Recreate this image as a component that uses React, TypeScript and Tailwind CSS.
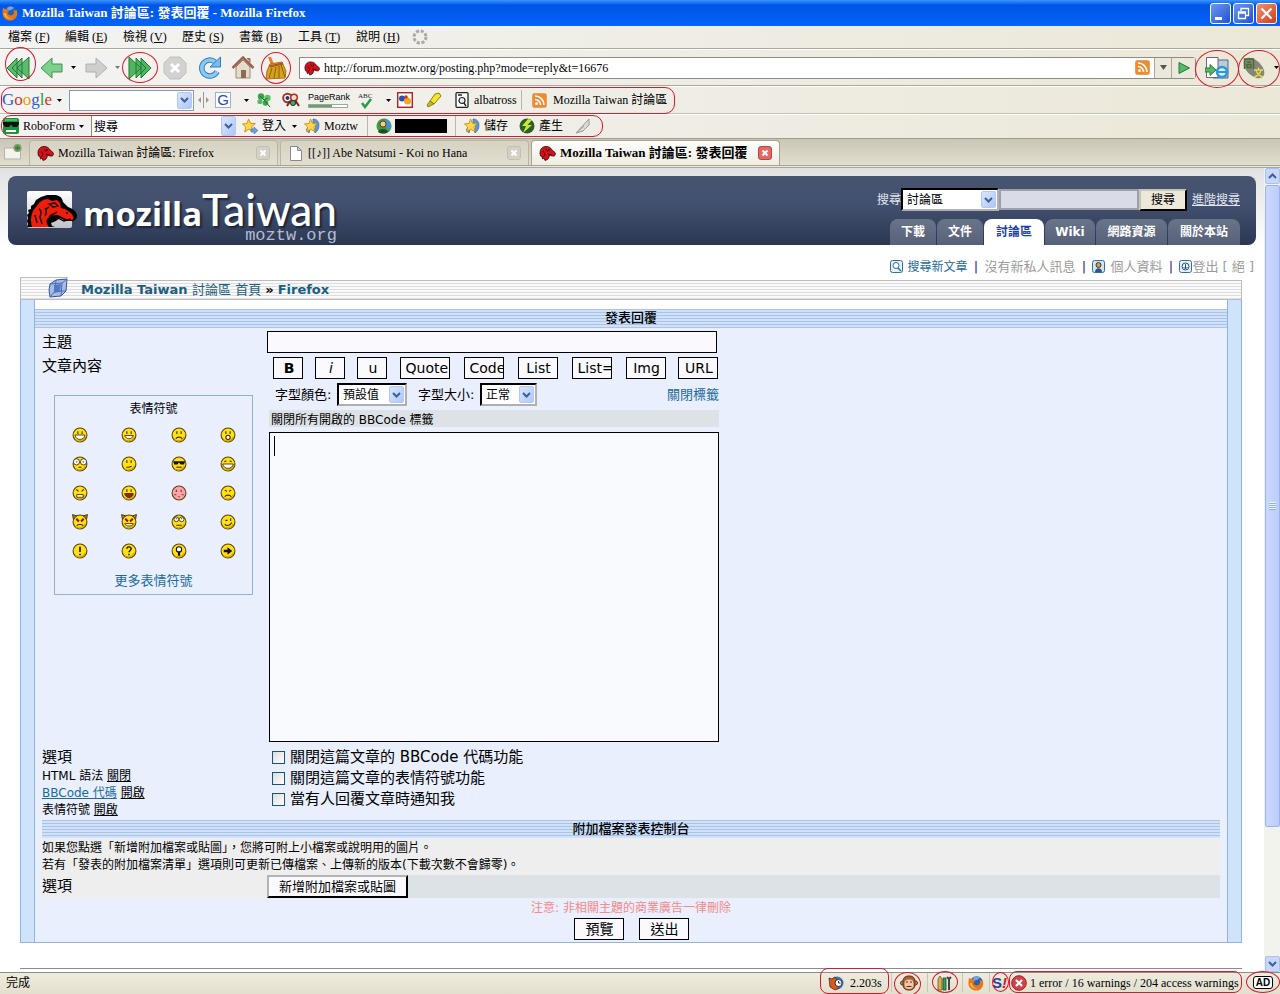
import React from "react";

const serif = "font-['Liberation_Serif','Noto_Sans_CJK_TC',serif]";
const sans = "font-['DejaVu_Sans','Noto_Sans_CJK_TC',sans-serif]";

const menus = [
  ["檔案", "F", "w-[57px]"],
  ["編輯", "E", "w-[58px]"],
  ["檢視", "V", "w-[59px]"],
  ["歷史", "S", "w-[57px]"],
  ["書籤", "B", "w-[59px]"],
  ["工具", "T", "w-[58px]"],
  ["說明", "H", "w-[56px]"],
];

const siteTabs = [
  ["下載", "w-[46px]"],
  ["文件", "w-[46px]"],
  ["討論區", "w-[60px]"],
  ["Wiki", "w-[50px]"],
  ["網路資源", "w-[71px]"],
  ["關於本站", "w-[72px]"],
];

const faces = [
  "grin", "smile", "sad", "shock",
  "eek", "confused", "cool", "lol",
  "mad", "razz", "blush", "cry",
  "evil", "twisted", "roll", "wink",
  "!", "?", "idea", "arrow",
];

/* Red pen marks drawn around the add-ons */
function Ring({ className }: { className: string }) {
  return <span className={`pointer-events-none absolute z-10 border border-[#d8182c] ${className}`} />;
}

function Caret() {
  return (
    <svg className="h-[3px] w-[5px] shrink-0" viewBox="0 0 5 3">
      <path d="M0 0h5L2.5 3z" fill="#000" />
    </svg>
  );
}

function Sep() {
  return <span className="h-5 w-px shrink-0 bg-[#b9b7a8]" />;
}

function DropArrow({ className }: { className: string }) {
  return (
    <span
      className={`pointer-events-none absolute flex w-[15px] items-center justify-center rounded-[2px] border border-[#b4c8f5] bg-linear-to-br from-[#dbe6fd] to-[#aec6f8] ${className}`}
    >
      <svg className="h-[6px] w-[9px]" viewBox="0 0 9 6">
        <path d="M1 1l3.500 3.500L8 1" fill="none" stroke="#3f5f94" strokeWidth="2" />
      </svg>
    </span>
  );
}

function XpSelect({ label, value, className }: { label: string; value: string; className: string }) {
  return (
    <span className={`relative flex h-[23px] shrink-0 ${className}`}>
      <select
        aria-label={label}
        className="h-full w-full appearance-none border-2 border-t-black border-l-black border-r-[#b0b0b0] border-b-[#b0b0b0] bg-white pl-1 text-[12px] leading-4 text-black"
      >
        <option>{value}</option>
      </select>
      <DropArrow className="top-[3px] right-[3px] bottom-[3px]" />
    </span>
  );
}

function Firefox() {
  return (
    <svg className="h-4 w-4 shrink-0" viewBox="0 0 16 16">
      <circle cx="8.500" cy="7.500" r="6.300" fill="#2b5fb3" />
      <path d="M5 3c2-2 5-2 7 0l-3 2-3 .5z" fill="#6fa8e8" />
      <path d="M1 3c1 .3 1.800 1 2.500 1C5 4 6 4.500 7 6L5.500 7.500c0 2.500 3 3.500 5 2.500 1.500-.8 2-3 1-5.500 2 1.200 2.700 2 2.800 0C17 9 14 15.500 8.500 15.500 3 15.500 0 11.500.5 7 .5 5.500.8 4.200 1 3z" fill="#e9761b" />
      <path d="M2 8c0 4 4 6.500 8 5.500-3 0-6-1.500-6-5z" fill="#fcc43c" />
    </svg>
  );
}

function Dino({ className }: { className: string }) {
  return (
    <svg className={`shrink-0 ${className}`} viewBox="0 0 17 16">
      <path d="M1 8C1 4 3.500 1.500 7 1.500c3 0 5 1.500 6 3.500l3 2.500c.8 1 .5 3-.8 3.500-2.200.5-3.700-.8-5.200-1 .5 1.500 0 3-1.500 4.500L6 15.500 5 13l-1.500 1L3 11.500 1.500 11z" fill="#d3121c" stroke="#300" strokeWidth=".8" />
      <path d="M4 6l2 3-1.500 3M7 4l2 3M9 9l4 1" stroke="#400" fill="none" strokeWidth=".8" />
      <circle cx="10" cy="5" r=".8" fill="#000" />
    </svg>
  );
}

function DinoLogo() {
  return (
    <svg className="h-[38px] w-[50px] shrink-0" viewBox="0 0 50 38">
      <defs>
        <linearGradient id="logo" x1="0" y1="0" x2="0" y2="1">
          <stop offset="0" stopColor="#fff" />
          <stop offset="1" stopColor="#bfc3ca" />
        </linearGradient>
      </defs>
      <rect x="0" y="0" width="45" height="37" rx="2" fill="url(#logo)" />
      <path d="M0 36l1-3-1-3 1-3-1-3 2-2-1-3 3-1v-3l3-2 2-4 5-3 6-2h7c5 0 8 2 9 7l5 5c5 2 8 4 9 8 0 4-2 6-6 6-5 0-8-1-11-3l-4 3-5 2 1 3 3 1H0z" fill="#000" />
      <path d="M5 36c-2-8-1-15 4-20 3-5 7-8 12-8l4 2 5-1 3 3 1 5c5 1 10 4 12 8 1 2 1 4-2 4-6 0-9-4-14-5-4 0-6 1-9 3-3 3-1 6 1 9z" fill="#f01c0c" />
      <path d="M30 21c-2 2-5 2-7 4 6 0 9 3 14 5l7-2M12 18c3 1 2 5 1 8l2 7M18 17c2 3 2 5 0 8M22 13l6-1 3 3-5 1zM8 24l2 8M22 16l-3 2" stroke="#1a0000" strokeWidth="1.400" fill="none" />
      <circle cx="40" cy="22" r="1" fill="#000" />
    </svg>
  );
}

function Star({ blue }: { blue?: boolean }) {
  return (
    <svg className="h-4 w-4 shrink-0" viewBox="0 0 16 16">
      {blue && <path d="M9 1c4 0 6 3 6 6s-1 6-4 8l-1-3 2-3-3-4zM2 11l4 1-1 3z" fill="#5b97d8" stroke="#2b5fa0" strokeWidth=".6" />}
      <path d="M6.500 1l2 4.300 4.800.3-3.600 3.200 1.400 4.800-4.400-2.400-4 2.800 1-4.900L.5 6l4.500-.6z" fill="#ffd64a" stroke="#c98b12" strokeWidth=".9" />
      {!blue && <path d="M9 11h3V9l4 3.500-4 3.500v-2H9z" fill="#6aa0e0" stroke="#2f62a8" strokeWidth=".5" />}
    </svg>
  );
}

function Rss() {
  return (
    <svg className="h-[15px] w-[15px] shrink-0" viewBox="0 0 15 15">
      <rect x=".5" y=".5" width="14" height="14" rx="2" fill="#f08a30" stroke="#e0a060" />
      <circle cx="4.500" cy="10.700" r="1.400" fill="#fff" />
      <path d="M3 6.500a5.500 5.500 0 015.500 5.500M3 3a9 9 0 019 9" stroke="#fff" strokeWidth="1.600" fill="none" />
    </svg>
  );
}

function Smiley({ kind }: { kind: string }) {
  const ink = "#3a2a00";
  const eyes = <path d="M5.500 4v2.500M9.500 4v2.500" stroke={ink} strokeWidth="1" />;
  return (
    <svg className="h-4 w-4" viewBox="0 0 15 15">
      {(kind === "evil" || kind === "twisted") && <path d="M.5.500L5 2 1.500 6zM14.500.5L10 2l3.500 4z" fill="#c87f10" stroke={ink} strokeWidth=".8" />}
      <circle cx="7.500" cy="7.500" r="6.500" fill={kind === "blush" ? "#f9a3ab" : "#ffe016"} stroke="#5a4300" />
      {kind !== "blush" && <path d="M3.500 12c3 2 7.500 1 9-3" stroke="#d9a400" fill="none" />}
      {kind === "grin" && <>{eyes}<path d="M3 7.500h9c0 5.500-9 5.500-9 0z" fill="#fff" stroke={ink} strokeWidth=".8" /></>}
      {kind === "smile" && <>{eyes}<path d="M3.500 8h8c-1 4-7 4-8 0z" fill="#fff" stroke={ink} strokeWidth=".8" /></>}
      {kind === "sad" && <>{eyes}<path d="M4.500 11c1-2 5-2 6 0" stroke={ink} fill="none" /></>}
      {kind === "shock" && <>{eyes}<circle cx="7.500" cy="9.700" r="2" fill="#fff" stroke={ink} /></>}
      {kind === "eek" && <><circle cx="4.200" cy="5.500" r="2.900" fill="#fff" stroke={ink} strokeWidth=".8" /><circle cx="10.800" cy="5.500" r="2.900" fill="#fff" stroke={ink} strokeWidth=".8" /><path d="M4 5.500h1M10 5.500h1M6 10.500h3" stroke={ink} /></>}
      {kind === "confused" && <>{eyes}<path d="M5 10.500h2.500l2.500-1" stroke={ink} fill="none" /></>}
      {kind === "cool" && <><path d="M2 5h11v1l-1 2H9L7.500 6 6 8H3z" fill="#111" /><path d="M5 10.500h5" stroke={ink} /></>}
      {kind === "lol" && <><path d="M4 5.500l2-1M11 5.500l-2-1" stroke={ink} /><path d="M2.500 7.500h10c-1 5.500-9 5.500-10 0z" fill="#fff" stroke={ink} strokeWidth=".8" /></>}
      {kind === "mad" && <><path d="M4 4l2 2M11 4L9 6" stroke={ink} /><path d="M4.500 9h6v2.500h-6z" fill="#fff" stroke={ink} strokeWidth=".8" /></>}
      {kind === "razz" && <>{eyes}<path d="M3.500 8h8c-.5 5-7.500 5-8 0z" fill="#a02010" stroke={ink} strokeWidth=".8" /></>}
      {kind === "blush" && <><path d="M5 4.500v2M9.500 4.500v2" stroke="#7a2028" /><path d="M3 9h2M10 9h2M6.500 11h2" stroke="#c93845" /></>}
      {kind === "cry" && <><path d="M4.500 5l2 .8M10.500 5l-2 .8" stroke={ink} /><path d="M4.500 11c1-2 5-2 6 0" stroke={ink} fill="none" /></>}
      {kind === "evil" && <><path d="M4 4.500l2.500 2.500M11 4.500L8.500 7" stroke="#8a1000" strokeWidth="1.800" /><path d="M4.500 11c1-1.500 5-1.500 6 0" stroke={ink} fill="none" /></>}
      {kind === "twisted" && <><path d="M4 4.500l2.500 2.500M11 4.500L8.500 7" stroke="#8a1000" strokeWidth="1.800" /><path d="M3.500 9h8c-1 3-7 3-8 0z" fill="#fff" stroke={ink} strokeWidth=".8" /></>}
      {kind === "roll" && <><circle cx="5" cy="5" r="2.200" fill="#fff" stroke={ink} strokeWidth=".8" /><circle cx="10" cy="5" r="2.200" fill="#fff" stroke={ink} strokeWidth=".8" /><path d="M5 4v1M10 4v1M5 10.500h5" stroke={ink} /></>}
      {kind === "wink" && <><path d="M5 6h2M10 4v2.500" stroke={ink} /><path d="M4.500 9.500c1.500 2 5 2 6.500-1.500" stroke={ink} fill="none" /></>}
      {kind === "!" && <path d="M7.500 3.500v5M7.500 10v1.500" stroke="#111" strokeWidth="1.500" />}
      {kind === "?" && <path d="M5.500 5.500c0-2.500 4-2.500 4 0 0 1.500-2 1.500-2 3.200M7.500 10v1.500" stroke="#111" strokeWidth="1.300" fill="none" />}
      {kind === "idea" && <><circle cx="7.500" cy="6" r="2.500" fill="#fff" stroke="#111" /><path d="M7.500 8v4" stroke="#111" strokeWidth="2" /></>}
      {kind === "arrow" && <path d="M3.500 6.300H7V4l4.500 3.500L7 11V8.700H3.500z" fill="#111" />}
    </svg>
  );
}

function TitleBar() {
  return (
    <header className="flex h-[26px] shrink-0 items-center bg-linear-to-b from-[#3a95ff] via-[#0055e5] via-20% to-[#0563fb] pr-[3px] pl-[2px] text-[13px] font-bold text-white">
      <Firefox />
      <h1 className="ml-1 grow whitespace-nowrap">Mozilla Taiwan 討論區: 發表回覆 - Mozilla Firefox</h1>
      <div className="flex gap-[2px]">
        <button aria-label="Minimize" className="h-[21px] w-[21px] rounded-[3px] border border-white bg-linear-to-br from-[#6d98f5] to-[#2350d0]">
          <svg viewBox="0 0 19 19"><path d="M4 14.500h7" stroke="#fff" strokeWidth="3" /></svg>
        </button>
        <button aria-label="Restore" className="h-[21px] w-[21px] rounded-[3px] border border-white bg-linear-to-br from-[#6d98f5] to-[#2350d0]">
          <svg viewBox="0 0 19 19"><path d="M7 7V4.500h7.500v7H12M4.500 8h7v6.500h-7zM4.500 9h7" stroke="#fff" strokeWidth="1.300" fill="none" /></svg>
        </button>
        <button aria-label="Close" className="h-[21px] w-[21px] rounded-[3px] border border-white bg-linear-to-br from-[#f09070] to-[#d03a10]">
          <svg viewBox="0 0 19 19"><path d="M4.500 4.500l10 10M14.500 4.500l-10 10" stroke="#fff" strokeWidth="2.200" /></svg>
        </button>
      </div>
    </header>
  );
}

function MenuBar() {
  return (
    <nav className="flex h-[23px] shrink-0 items-center border-b border-[#aca899] pb-px pl-2">
      {menus.map(([name, key, width]) => (
        <button key={key} className={`text-left whitespace-nowrap ${width}`}>
          {name} (<u>{key}</u>)
        </button>
      ))}
      <svg className="h-4 w-4" viewBox="0 0 16 16">
        <circle cx="8" cy="8" r="6" fill="none" stroke="#a9a9a9" strokeWidth="3" strokeDasharray="3 1.710" />
      </svg>
    </nav>
  );
}

function NavBar() {
  return (
    <div className="flex h-[37px] shrink-0 items-center border-t border-b border-t-white border-b-[#aca899]">
      <button aria-label="Rewind" className="relative flex w-9 justify-center">
        <svg className="h-6 w-6" viewBox="0 0 24 24">
          <path d="M1 12L11 2v20zM6 12L16 2v20zM11 12L23 1v22z" fill="#5cbb6c" stroke="#217a35" />
        </svg>
        <Ring className="-top-[9px] left-[5px] h-[34px] w-[31px] rounded-[50%]" />
      </button>
      <button aria-label="Back" className="flex w-[31px] justify-center">
        <svg className="h-6 w-6" viewBox="0 0 24 24">
          <path d="M1 12L12 2v6h10v8H12v6z" fill="#7fd08c" stroke="#3b9450" />
        </svg>
      </button>
      <span className="flex w-[13px] justify-center"><Caret /></span>
      <button aria-label="Forward" className="flex w-[31px] justify-center">
        <svg className="h-6 w-6" viewBox="0 0 24 24">
          <path d="M23 12L12 2v6H2v8h10v6z" fill="#cfcfcf" stroke="#b0b0b0" />
        </svg>
      </button>
      <span className="flex w-[13px] justify-center opacity-50"><Caret /></span>
      <button aria-label="Fast forward" className="relative flex w-8 justify-center">
        <svg className="h-6 w-6" viewBox="0 0 24 24">
          <path d="M13 2l10 10-10 10zM8 2l10 10L8 22zM1 1l12 11L1 23z" fill="#4fb55f" stroke="#217a35" />
        </svg>
        <Ring className="-top-1 -left-[2px] h-[31px] w-9 rounded-[50%]" />
      </button>
      <button aria-label="Stop" className="flex w-[38px] justify-center">
        <svg className="h-6 w-6" viewBox="0 0 24 24">
          <path d="M7 1h10l6 6v10l-6 6H7l-6-6V7z" fill="#d2d2d2" stroke="#c0c0c0" />
          <path d="M8 8l8 8M16 8l-8 8" stroke="#fff" strokeWidth="3" />
        </svg>
      </button>
      <button aria-label="Reload" className="flex w-[31px] justify-center">
        <svg className="h-6 w-6" viewBox="0 0 24 24">
          <path d="M19 15.500A8 8 0 1117 6" fill="none" stroke="#2f7fc0" strokeWidth="5.500" />
          <path d="M19 15.500A8 8 0 1117 6" fill="none" stroke="#8cc8f0" strokeWidth="3.500" />
          <path d="M22.500 1v10H12z" fill="#7cbcea" stroke="#2f7fc0" />
        </svg>
      </button>
      <button aria-label="Home" className="flex w-9 justify-center">
        <svg className="h-6 w-6" viewBox="0 0 24 24">
          <path d="M5 11v11h14V11l-7-7z" fill="#e6dccb" stroke="#9b8a76" />
          <path d="M1.500 12L12 1.500 22.500 12" fill="none" stroke="#99644e" strokeWidth="2.500" />
          <path d="M16 2.500h3v4" fill="#a88" stroke="#99644e" />
          <path d="M10 14h5v8h-5z" fill="#8d6a52" />
        </svg>
      </button>
      <button aria-label="Clean up" className="relative flex w-[30px] justify-center">
        <svg className="h-6 w-6" viewBox="0 0 24 24">
          <path d="M4 1h3l3 7-3 1z" fill="#f07828" />
          <path d="M6 8l12-2 4 9-1 7-19 1 1-8z" fill="#d6a11e" stroke="#a87510" />
          <path d="M6 11l13-3M8 12L5 22M12 11l-2 11M15 10v12M17 9l4 12" stroke="#8f5d0c" />
          <path d="M5 10l14-3" stroke="#c0392b" />
        </svg>
        <Ring className="-top-1 left-0 h-8 w-[30px] rounded-[50%]" />
      </button>
      <div className="ml-2 flex h-[22px] grow items-center rounded-r-[3px] border border-[#8c8c84] bg-white">
        <span className="ml-1 flex"><Dino className="h-4 w-4" /></span>
        <input
          aria-label="Location"
          defaultValue="http://forum.moztw.org/posting.php?mode=reply&t=16676"
          className="ml-1 min-w-0 grow bg-transparent text-[12px] outline-none"
        />
        <Rss />
        <button aria-label="History" className="ml-1 flex h-full w-[17px] items-center justify-center border-l border-[#aca899] bg-[#ece9dc]">
          <svg className="h-[5px] w-[7px]" viewBox="0 0 7 5"><path d="M0 0h7L3.500 5z" fill="#555" /></svg>
        </button>
        <button aria-label="Go" className="flex h-full w-6 items-center justify-center border-l border-[#aca899] bg-[#ece9dc]">
          <svg className="h-3 w-3" viewBox="0 0 12 12"><path d="M1 .5L11.500 6 1 11.500z" fill="#57b868" stroke="#1f7a35" /></svg>
        </button>
      </div>
      <button aria-label="View in IE" className="relative flex w-[42px] justify-center">
        <svg className="h-6 w-6" viewBox="0 0 24 24">
          <path d="M12 4h11v18H8z" fill="#b9cbdc" stroke="#567" />
          <path d="M1.500 1.500H13v20H1.500z" fill="#fff" stroke="#667" />
          <circle cx="17" cy="16" r="5" fill="#d8ecfa" stroke="#2f96d8" strokeWidth="2.600" />
          <path d="M13 16h8" stroke="#2f96d8" strokeWidth="2" />
          <path d="M0 12h5V8.500l6 5.500-6 5.500V16H0z" fill="#58b768" stroke="#2a7f3c" />
        </svg>
        <Ring className="-top-[6px] -left-[1px] h-[38px] w-[44px] rounded-[50%]" />
      </button>
      <button aria-label="Tongwen" className="relative flex w-[42px] items-center pl-1">
        <svg className="h-6 w-6" viewBox="0 0 24 24">
          <ellipse cx="12" cy="12" rx="12.500" ry="7.500" transform="rotate(45 12 12)" fill="#85857c" />
          <path d="M2.500 13V3h9v10M5 6h4M5 8.500h4v3H5z" fill="none" stroke="#42702c" strokeWidth="1.400" />
          <path d="M12 14h9M16.500 11.500V14M19 14c-1 4-3 6-7 7M14 14c1 4 3 6 7 7" fill="none" stroke="#e8d848" strokeWidth="1.400" />
        </svg>
        <span className="ml-auto flex pr-[1px]"><Caret /></span>
        <Ring className="-top-[6px] left-0 h-[38px] w-[42px] rounded-[50%]" />
      </button>
    </div>
  );
}

function GoogleBar() {
  return (
    <div className="flex h-7 shrink-0 items-center border-t border-b border-t-white border-b-[#c5c2b2]">
      <div className="relative flex h-[27px] items-center pl-[2px]">
        <Ring className="top-0 right-0 left-px h-[27px] rounded-[10px]" />
        <button className="flex w-[67px] items-center text-[17px] leading-5" aria-label="Google">
          <span className="text-[#2f5bd0]">G</span>
          <span className="text-[#d8342c]">o</span>
          <span className="text-[#e8a010]">o</span>
          <span className="text-[#2f5bd0]">g</span>
          <span className="text-[#2c9a3f]">l</span>
          <span className="text-[#d8342c]">e</span>
          <span className="ml-auto flex pr-[7px]"><Caret /></span>
        </button>
        <span className="relative h-[21px] w-[125px]">
          <input aria-label="Google search" className="h-full w-full border border-[#7f9db9] bg-white px-1" />
          <DropArrow className="top-[2px] right-[2px] bottom-[2px]" />
        </span>
        <svg className="ml-1 h-4 w-[11px]" viewBox="0 0 11 16">
          <path d="M5.500 0v16" stroke="#999" />
          <path d="M3 5v6L0 8zM8 5v6l3-3z" fill="#999" />
        </svg>
        <span className="ml-[6px] flex h-4 w-4 items-center justify-center border border-[#9ab0d8] bg-white text-[15px] leading-4 text-[#2b4fa8] font-['Liberation_Sans',sans-serif]">G</span>
        <span className="flex w-[25px] justify-end pr-[7px]"><Caret /></span>
        <svg className="h-4 w-4" viewBox="0 0 16 16">
          <circle cx="5" cy="4.500" r="3.200" fill="#3ca54a" /><circle cx="11.500" cy="6" r="3.200" fill="#62c06a" />
          <circle cx="4" cy="9.500" r="2.600" fill="#58b862" /><circle cx="9.500" cy="11" r="2.800" fill="#3ca54a" />
          <path d="M8 8l6 7M8 8L4 4M8 8l4-2" stroke="#1f7030" />
        </svg>
        <svg className="ml-[10px] h-4 w-[18px]" viewBox="0 0 18 16">
          <circle cx="5.500" cy="6" r="4.300" fill="#fff" stroke="#b03020" strokeWidth="2" />
          <circle cx="5.500" cy="6" r="2" fill="#233a80" />
          <circle cx="12" cy="5.500" r="3.300" fill="#f6d9c0" stroke="#b03020" strokeWidth="1.500" />
          <path d="M8 9l-3 5M13 8l4 6" stroke="#802010" strokeWidth="2" />
          <circle cx="11" cy="11" r="2.600" fill="#3cae4e" stroke="#235" />
        </svg>
        <div className="ml-2 w-[46px] text-[9px] leading-[10px] font-['Liberation_Sans',sans-serif]">
          PageRank
          <div className="mt-[2px] flex h-1 w-10 border border-[#9a9]">
            <div className="w-[23px] bg-[#6f9a72]" />
            <div className="grow bg-white" />
          </div>
        </div>
        <svg className="ml-1 h-[18px] w-4" viewBox="0 0 16 18">
          <text x="0" y="7" fontSize="7" fill="#222">ABC</text>
          <path d="M4 12l3 4 6-8" stroke="#2c9a4a" strokeWidth="2.500" fill="none" />
        </svg>
        <span className="flex w-[23px] justify-end pr-[6px]"><Caret /></span>
        <svg className="h-4 w-4" viewBox="0 0 16 16">
          <rect x=".7" y=".7" width="14.600" height="14.600" fill="#fff" stroke="#b02020" strokeWidth="1.400" />
          <circle cx="5" cy="6.500" r="3" fill="#2b4fb0" /><circle cx="10.500" cy="9" r="3.500" fill="#f0a820" /><circle cx="9" cy="5" r="1.800" fill="#d03020" />
        </svg>
        <svg className="ml-[13px] h-4 w-4" viewBox="0 0 16 16">
          <path d="M9 2l4-1 2 3-7 8-4-3z" fill="#f4e526" stroke="#8a8210" />
          <path d="M4 9l4 3-6 3-1-2z" fill="#c7ba14" stroke="#6c650a" strokeWidth=".7" />
        </svg>
        <svg className="ml-3 h-4 w-4" viewBox="0 0 16 16">
          <rect x="2" y=".7" width="12" height="14.600" rx="1" fill="#fff" stroke="#222" strokeWidth="1.300" />
          <circle cx="8" cy="8.500" r="3" fill="#def" stroke="#222" strokeWidth="1.200" />
          <path d="M4 3h4M10 11l2 3" stroke="#222" strokeWidth="1.400" />
        </svg>
        <span className="ml-1 w-[47px]">albatross</span>
        <Sep />
        <span className="ml-[10px]"><Rss /></span>
        <a href="#taiwan" className="mr-2 ml-[6px] whitespace-nowrap">Mozilla Taiwan 討論區</a>
      </div>
    </div>
  );
}

function RoboBar() {
  return (
    <div className="flex h-6 shrink-0 items-center border-t border-white">
      <div className="relative flex h-[23px] items-center pr-3 pb-px pl-[3px]">
        <Ring className="top-0 right-0 left-[1px] h-[22px] rounded-[10px]" />
        <svg className="h-4 w-4" viewBox="0 0 16 16">
          <rect width="16" height="16" rx="2" fill="#1c9440" />
          <path d="M0 4h16v2l-2 3h-4L8 6.500 6 9H2L0 6z" fill="#111" />
          <path d="M3 12h10v2H3z" fill="#fff" />
          <path d="M2 2h12" stroke="#7fe090" />
        </svg>
        <button className="ml-1 flex w-[68px] items-center">
          RoboForm
          <span className="ml-auto flex pr-[7px]"><Caret /></span>
        </button>
        <span className="relative h-5 w-[145px]">
          <input aria-label="RoboForm search" defaultValue="搜尋" className="h-full w-full border-l border-[#8a8a80] bg-white px-[2px] text-[12px]" />
          <DropArrow className="top-0 right-0 bottom-0" />
        </span>
        <span className="ml-[6px]"><Star /></span>
        <button className="ml-1 flex w-[42px] items-center">
          登入
          <span className="ml-auto flex pr-[7px]"><Caret /></span>
        </button>
        <Star blue />
        <button className="ml-1 w-[43px] text-left">Moztw</button>
        <Sep />
        <svg className="ml-2 h-4 w-4" viewBox="0 0 16 16">
          <circle cx="8" cy="8" r="7.500" fill="#3c9c3c" />
          <path d="M9 1c4 1 7 5 6 9l-4 2z" fill="#4a8fd8" />
          <circle cx="7" cy="6" r="3" fill="#f3c9a0" stroke="#7a3a10" />
          <path d="M2 14c1-4 9-4 10 0-3 2-7 2-10 0z" fill="#1f4f20" />
        </svg>
        <span className="ml-[3px] h-[14px] w-[52px] bg-black" />
        <span className="mr-2 ml-2 flex"><Sep /></span>
        <Star blue />
        <button className="ml-1 w-[35px] text-left">儲存</button>
        <svg className="h-4 w-4" viewBox="0 0 16 16">
          <circle cx="8" cy="8" r="7.500" fill="#2f5f25" />
          <path d="M9 1L3 8h4l-3 7 9-8H8.500L13 2z" fill="#c9e83a" />
        </svg>
        <button className="ml-1 w-[36px] text-left">產生</button>
        <svg className="h-4 w-4" viewBox="0 0 16 16">
          <path d="M1 15L14 1v6l-6 6z" fill="#dcdcd6" stroke="#9a9a94" />
          <path d="M1 15l8-7" stroke="#9a9a94" />
        </svg>
      </div>
    </div>
  );
}

function Tab({ label, active, icon }: { label: string; active?: boolean; icon: React.ReactNode }) {
  return (
    <div
      role="tab"
      aria-selected={!!active}
      className={`flex h-[25px] w-[249px] items-center rounded-t-[4px] border border-b-0 pr-[7px] pl-[7px] ${
        active ? "border-[#a5a391] bg-linear-to-b from-[#fdfdfb] to-[#efede2] font-bold" : "border-[#b9b6a4] bg-linear-to-b from-[#d6d3c3] to-[#e2dfd0]"
      }`}
    >
      {icon}
      <span className={`ml-1 grow overflow-hidden whitespace-nowrap ${active ? "text-[13px]" : "text-[12px]"}`}>{label}</span>
      <button aria-label="Close tab" className={`h-[14px] w-[14px] rounded-[3px] border ${active ? "border-[#c04040] bg-[#df6a68]" : "border-[#c2c0b2] bg-[#d4d1c4]"}`}>
        <svg viewBox="0 0 12 12"><path d="M3.500 3.500l5 5M8.500 3.500l-5 5" stroke="#fff" strokeWidth="2" /></svg>
      </button>
    </div>
  );
}

function TabStrip() {
  return (
    <div role="tablist" className="flex h-[30px] shrink-0 flex-col border-t border-[#9f9d8e] bg-linear-to-b from-[#c9c6b5] to-[#e4e1d2]">
      <div className="flex h-[27px] items-end gap-[2px] border-b border-[#a5a391]">
        <button aria-label="New tab" className="mb-[5px] ml-1 w-[23px]">
          <svg className="h-[17px] w-[18px]" viewBox="0 0 18 17">
            <path d="M.5 5h10l3-3h3v14H.5z" fill="#f4f4ee" stroke="#b5b3a5" />
            <circle cx="13.500" cy="5" r="4" fill="#8a9a70" />
            <path d="M13.500 2.500v5M11 5h5" stroke="#2e8a2e" strokeWidth="1.800" />
          </svg>
        </button>
        <Tab label="Mozilla Taiwan 討論區: Firefox" icon={<Dino className="h-4 w-[17px]" />} />
        <Tab
          label="[[♪]] Abe Natsumi - Koi no Hana"
          icon={
            <svg className="mr-[2px] ml-[2px] h-[15px] w-3" viewBox="0 0 12 15">
              <path d="M.5.5h7l4 4v10H.5zM7.500.5v4h4" fill="#fff" stroke="#8a8a8a" />
            </svg>
          }
        />
        <Tab active label="Mozilla Taiwan 討論區: 發表回覆" icon={<Dino className="h-4 w-[17px]" />} />
      </div>
      <div className="grow border-b border-[#a9a795] bg-[#ece9dc]" />
    </div>
  );
}

function SiteHeader() {
  return (
    <div className="flex h-[69px] rounded-lg bg-linear-to-b from-[#46546f] via-[#435170] via-40% to-[#2b3752] pr-4 pl-[19px]">
      <a href="#home" className="flex grow items-start pt-[15px] text-white" aria-label="mozillaTaiwan moztw.org">
        <DinoLogo />
        <div className="ml-[6px]">
          <div className="text-[33px] leading-9 whitespace-nowrap [text-shadow:2px_2px_2px_#1b2438]">
            <span className="font-bold font-['Open_Sans',sans-serif]">mozilla</span>
            <span className="text-[44px] font-medium font-['Lato',sans-serif]">Taiwan</span>
          </div>
          <div className="-mt-[7px] text-right text-[17px] leading-5 text-[#b4bdd0] font-['Liberation_Mono',monospace]">moztw.org</div>
        </div>
      </a>
      <div className="flex flex-col items-end">
        <form className="flex items-center pt-3 text-[12px] text-[#e2e6ee]">
          <label htmlFor="q">搜尋</label>
          <XpSelect label="搜尋範圍" value="討論區" className="w-[98px]" />
          <input id="q" className="h-[21px] w-[140px] border-2 border-[#9aa0ac] bg-[#d9dce5] px-1 text-black" />
          <button type="button" className="h-[22px] w-12 border-2 border-t-[#c5c5b8] border-r-black border-b-black border-l-[#c5c5b8] bg-[#ece9d8] text-black">搜尋</button>
          <a href="#advanced" className="ml-[5px] underline">進階搜尋</a>
        </form>
        <nav className="mt-auto flex gap-px text-[12px] font-bold">
          {siteTabs.map(([name, width]) => (
            <a
              key={name}
              href="#tab"
              className={`flex h-[26px] items-center justify-center rounded-t-lg ${width} ${
                name === "討論區" ? "bg-white text-[#1b3fa8]" : "bg-linear-to-b from-[#6a7489] to-[#566178] text-white"
              }`}
            >
              {name}
            </a>
          ))}
        </nav>
      </div>
    </div>
  );
}

function UserLinks() {
  const bar = <span className="w-[17px] text-center text-[#33208a]">|</span>;
  return (
    <div className="flex h-[31px] items-center justify-end pt-3 pr-[2px] text-[13px] leading-4 whitespace-nowrap text-[#9b9b9b]">
      <a href="#new" className="flex items-center text-[12px] text-[#1b6a9a]">
        <svg className="mr-1 h-[13px] w-[13px]" viewBox="0 0 13 13">
          <rect x=".5" y=".5" width="12" height="12" rx="2" fill="#e4f2fc" stroke="#2f6fa0" />
          <circle cx="6" cy="5.500" r="3" fill="#fff" stroke="#2f6fa0" /><path d="M8 8l3 3" stroke="#2f6fa0" strokeWidth="1.500" />
        </svg>
        搜尋新文章
      </a>
      {bar}
      <a href="#pm">沒有新私人訊息</a>
      {bar}
      <a href="#profile" className="flex items-center">
        <svg className="mr-[5px] h-[13px] w-[13px]" viewBox="0 0 13 13">
          <rect x=".5" y=".5" width="12" height="12" rx="2" fill="#cfe6fa" stroke="#2f6fa0" />
          <circle cx="6.500" cy="5" r="2.500" fill="#d99a5c" stroke="#432" /><path d="M3 12c0-5 7-5 7 0z" fill="#357" />
        </svg>
        個人資料
      </a>
      {bar}
      <a href="#logout" className="flex items-center">
        <svg className="h-[13px] w-[13px]" viewBox="0 0 13 13">
          <rect x=".5" y=".5" width="12" height="12" rx="2" fill="#e4f2fc" stroke="#2f6fa0" />
          <circle cx="6.500" cy="6.500" r="3.500" fill="#fff" stroke="#1f5080" /><path d="M6.500 4v5M4.500 7l2 2 2-2" stroke="#1f5080" fill="none" />
        </svg>
        登出 [ 絕 ]
      </a>
    </div>
  );
}

const greyStripes = "bg-[repeating-linear-gradient(to_bottom,#fafafa_0_2px,#dedede_2px_3px)]";

function Breadcrumb() {
  return (
    <nav className={`relative mt-1 flex h-5 items-center border border-[#bdbdbd] pl-[60px] text-[13px] font-bold text-[#1b6080] ${greyStripes}`}>
      <span className={`absolute -top-1 -left-px flex h-5 w-12 justify-end border-t border-l border-[#bdbdbd] ${greyStripes}`}>
        <svg className="h-5 w-5" viewBox="0 0 20 20">
          <path d="M2 6l6-4 11-1-1 12-5 5-11 1-1-7z" fill="#a9bce6" stroke="#33549c" />
          <path d="M2 6l12-1 5-4M14 5l-1 13M8 2L7 13l11 0M7 13l-5 6" stroke="#4a6ab0" fill="none" />
          <path d="M6 7l7-1-1 8-6 1z" fill="#5378c4" />
        </svg>
      </span>
      <a href="#index">Mozilla Taiwan <span className="font-normal">討論區 首頁</span></a>
      <span className="mx-1 text-black">»</span>
      <a href="#firefox">Firefox</a>
    </nav>
  );
}

const stripes = "bg-[repeating-linear-gradient(to_bottom,#a9c4ec_0_1px,#d0e1f8_1px_3px)]";
const cell = "h-[22px] shrink-0 overflow-hidden whitespace-nowrap border border-black bg-[#f9f9fe]";

function Emoticons() {
  return (
    <section className="mt-[19px] ml-[12px] flex h-[200px] w-[199px] flex-col items-center border border-[#92b0dc]">
      <h3 className="mt-1 text-[12px] leading-[18px]">表情符號</h3>
      <div className="mt-[2px] grid grid-cols-4">
        {faces.map((f) => (
          <button key={f} type="button" aria-label={f} className="flex h-[29px] w-[50px] items-center justify-center">
            <Smiley kind={f} />
          </button>
        ))}
      </div>
      <a href="#more" className="mt-[6px] text-[13px] leading-5 text-[#1b6a9a]">更多表情符號</a>
    </section>
  );
}

function PostEditor() {
  return (
    <div className="w-[452px] text-[14px]">
      <div className="ml-[6px] flex justify-between pr-[1px]">
        <div className="flex gap-3">
          <button type="button" className={`${cell} w-[30px] pl-[2px] font-bold`}>B</button>
          <button type="button" className={`${cell} w-[30px] pl-[2px] italic`}>i</button>
          <button type="button" className={`${cell} w-[30px] pl-[2px]`}>u</button>
        </div>
        <div className="flex gap-[14px]">
          <button type="button" className={`${cell} w-[50px] pl-[5px] text-left`}>Quote</button>
          <button type="button" className={`${cell} w-10 pl-[5px] text-left`}>Code</button>
          <button type="button" className={`${cell} w-10 pl-[2px]`}>List</button>
          <button type="button" className={`${cell} w-10 pl-[5px] text-left`}>List=</button>
          <button type="button" className={`${cell} w-10 pl-[2px]`}>Img</button>
        </div>
        <button type="button" className={`${cell} w-10 pl-[2px]`}>URL</button>
      </div>
      <div className="mt-1 ml-2 flex items-center text-[13px] leading-5">
        <span className="w-[62px]">字型顏色:</span>
        <XpSelect label="字型顏色" value="預設值" className="w-[70px]" />
        <span className="ml-[11px] w-[62px]">字型大小:</span>
        <XpSelect label="字型大小" value="正常" className="w-[57px]" />
        <a href="#close" className="ml-auto text-[#1b6a9a]">關閉標籤</a>
      </div>
      <input
        readOnly
        aria-label="說明"
        value="關閉所有開啟的 BBCode 標籤"
        className="mt-1 ml-[2px] block h-[17px] w-[450px] bg-[#dde2e6] pl-[2px] text-[12px] outline-none"
      />
      <div className="relative mt-[5px] ml-[2px]">
        <textarea aria-label="文章內容" className="block h-[310px] w-[450px] resize-none border border-black bg-[#f9fafe] p-1 outline-none" />
        <span className="absolute top-1 left-[5px] h-5 w-px bg-black" />
      </div>
    </div>
  );
}

function PostForm() {
  return (
    <main className="flex border border-t-0 border-[#8fb4e4] bg-[#cfe4fb]">
      <form className="mx-[13px] min-w-0 grow border-x border-[#8fb4e4] bg-[#e9effc]">
        <div className="h-[9px] bg-white" />
        <h2 className={`flex h-[19px] items-center justify-center border-b border-[#a9c4ec] text-[13px] font-medium ${stripes}`}>發表回覆</h2>

        <div className="mt-[3px] flex">
          <label htmlFor="subject" className="w-[232px] pl-[7px] text-[15px] leading-[22px]">主題</label>
          <input id="subject" className="h-[22px] w-[450px] border border-black bg-[#f9f9fe] px-1" />
        </div>

        <div className="mt-1 flex">
          <div className="w-[232px] pl-[7px]">
            <h3 className="text-[15px] leading-[19px]">文章內容</h3>
            <Emoticons />
          </div>
          <PostEditor />
        </div>

        <div className="mt-[5px] flex">
          <div className="w-[232px] pl-[7px] text-[12px] leading-[17px]">
            <h3 className="text-[15px] leading-[21px]">選項</h3>
            <p>HTML 語法 <u>關閉</u></p>
            <p><a href="#bbcode" className="text-[#1b6a9a] underline">BBCode 代碼</a> <u>開啟</u></p>
            <p>表情符號 <u>開啟</u></p>
          </div>
          <div className="ml-[5px] text-[15px] leading-[21px]">
            {["關閉這篇文章的 BBCode 代碼功能", "關閉這篇文章的表情符號功能", "當有人回覆文章時通知我"].map((t) => (
              <label key={t} className="flex items-center gap-[5px]">
                <input type="checkbox" className="h-[13px] w-[13px] appearance-none border border-[#1c5180] bg-linear-to-br from-[#dcdcd7] to-white" />
                {t}
              </label>
            ))}
          </div>
        </div>

        <section className="mx-[7px] mt-px text-[12px]">
          <h2 className={`flex h-[18px] items-center justify-center text-[13px] font-medium ${stripes}`}>附加檔案發表控制台</h2>
          <div className="mt-px bg-[#eeeeee] pt-px pb-px leading-[17px]">
            <p>如果您點選「新增附加檔案或貼圖」，您將可附上小檔案或說明用的圖片。</p>
            <p>若有「發表的附加檔案清單」選項則可更新已傳檔案、上傳新的版本(下載次數不會歸零)。</p>
          </div>
          <div className="flex h-[23px] bg-[#eeeeee]">
            <h3 className="w-[225px] shrink-0 text-[15px] leading-[22px]">選項</h3>
            <div className="grow bg-[#dde2e6]">
              <button type="button" className="h-[23px] w-[141px] border-2 border-t-[#b4b4b4] border-r-black border-b-black border-l-[#b4b4b4] bg-[#f9f9fe] text-[13px] leading-4">
                新增附加檔案或貼圖
              </button>
            </div>
          </div>
        </section>

        <div className="pb-[2px] text-center">
          <p className="text-[12px] leading-5 text-[#f48a8a]">注意: 非相關主題的商業廣告一律刪除</p>
          <div className="flex justify-center gap-[15px] text-[14px]">
            <button type="button" className={`${cell} w-[50px] pl-[2px]`}>預覽</button>
            <button type="button" className={`${cell} w-[50px] pl-[2px]`}>送出</button>
          </div>
        </div>
      </form>
    </main>
  );
}

function ScrollBar() {
  return (
    <div className="flex w-4 shrink-0 flex-col items-center bg-[#f3f3ee]">
      <button aria-label="Scroll up" className="flex h-4 w-[15px] items-center justify-center rounded-[2px] border border-[#a9c0f0] bg-[#c8d6fb]">
        <svg className="h-[6px] w-[9px]" viewBox="0 0 9 6"><path d="M1 5l3.500-3.500L8 5" fill="none" stroke="#3f5f94" strokeWidth="2" /></svg>
      </button>
      <div className="mt-px flex w-[15px] grow-[83] items-center justify-center rounded-[2px] border border-[#98b4ec] bg-linear-to-r from-[#cbd8fc] to-[#bccdf9]">
        <span className="h-2 w-[7px] bg-[repeating-linear-gradient(to_bottom,#eef4fe_0_1px,#8cb0f8_1px_2px)]" />
      </div>
      <div className="grow-[17]" />
      <button aria-label="Scroll down" className="flex h-4 w-[15px] items-center justify-center rounded-[2px] border border-[#a9c0f0] bg-[#c8d6fb]">
        <svg className="h-[6px] w-[9px]" viewBox="0 0 9 6"><path d="M1 1l3.500 3.500L8 1" fill="none" stroke="#3f5f94" strokeWidth="2" /></svg>
      </button>
    </div>
  );
}

function StatusBar() {
  const item = "relative flex h-full shrink-0 items-center justify-center border-l border-[#c9c6b6]";
  return (
    <footer className="flex h-[22px] shrink-0 items-center border-t border-[#8f8d80] bg-linear-to-b from-[#efecdf] to-[#e2dfcd] pb-[2px]">
      <span className="grow pl-[6px] text-[12px]">完成</span>
      <div className="relative flex h-full w-[71px] shrink-0 items-center pl-2">
        <Ring className="-top-[5px] left-0 h-[26px] w-[69px] rounded-lg" />
        <svg className="h-4 w-4" viewBox="0 0 16 16">
          <circle cx="9" cy="8" r="6.500" fill="#3a78c0" />
          <path d="M1 3l3 1 3-2 2 3-2 3 4 5-4 2-5-3z" fill="#d65a1c" stroke="#511" strokeWidth=".7" />
          <circle cx="10.500" cy="8" r="3.500" fill="#fff" stroke="#333" /><path d="M10.500 6v2h2" stroke="#333" fill="none" />
        </svg>
        <span className="ml-[6px]">2.203s</span>
      </div>
      <div className={`${item} w-9`}>
        <Ring className="-top-px left-[2px] h-6 w-[27px] rounded-[50%]" />
        <svg className="mr-[2px] h-4 w-[18px]" viewBox="0 0 18 16">
          <circle cx="2.500" cy="8" r="2" fill="#c98863" stroke="#5c3018" /><circle cx="15.500" cy="8" r="2" fill="#c98863" stroke="#5c3018" />
          <rect x="3" y="1" width="12" height="14" rx="5" fill="#a9603c" stroke="#5c3018" />
          <rect x="4.500" y="4.500" width="9" height="9.500" rx="4" fill="#f2c6a4" />
          <path d="M7 6v2M11 6v2M6.500 11.500h5" stroke="#5c3018" />
        </svg>
      </div>
      <div className={`${item} w-[35px]`}>
        <Ring className="-top-[2px] left-[4px] h-[22px] w-[26px] rounded-[50%]" />
        <svg className="h-4 w-4" viewBox="0 0 16 16">
          <path d="M1 4l2-3 2 3v11H1z" fill="#d8b23c" stroke="#654" strokeWidth=".8" />
          <path d="M6 3h3v12H6z" fill="#3c9c5a" stroke="#243" strokeWidth=".8" />
          <path d="M10 2l2 2 2-2M12 4v11" stroke="#444" strokeWidth="2" fill="none" />
        </svg>
      </div>
      <div className={`${item} w-[27px]`}><Firefox /></div>
      <div className={`${item} w-5 text-[15px] font-bold font-['Liberation_Sans',sans-serif]`}>
        <Ring className="-top-px left-[2px] h-5 w-[17px] rounded-[50%]" />
        <span className="text-[#2440a0]">S</span><span className="text-[#d01818] italic">!</span>
      </div>
      <div className="relative flex h-full w-[237px] shrink-0 items-center pl-[2px]">
        <Ring className="-top-[2px] left-0 h-[22px] w-[233px] rounded-lg" />
        <svg className="h-4 w-4" viewBox="0 0 16 16">
          <circle cx="8" cy="8" r="7.300" fill="#d2434a" stroke="#a02028" />
          <path d="M5 5l6 6M11 5l-6 6" stroke="#fff" strokeWidth="2.200" />
        </svg>
        <span className="ml-[3px] whitespace-nowrap">1 error / 16 warnings / 204 access warnings</span>
      </div>
      <div className="relative flex h-full w-[34px] shrink-0 items-center justify-center">
        <Ring className="-top-[2px] left-0 h-[22px] w-[34px] rounded-[50%]" />
        <span className="rounded-[3px] border border-black bg-white px-[2px] text-[10px] leading-[11px] font-bold font-['Liberation_Sans',sans-serif]">AD</span>
      </div>
    </footer>
  );
}

function App() {
  return (
    <div className={`flex h-screen flex-col overflow-hidden text-[12px] leading-4 text-black ${serif}`}>
      <TitleBar />
      <div className="flex shrink-0 flex-col bg-linear-to-r from-[#f3f3f2] to-[#ebe8d8]">
        <MenuBar />
        <NavBar />
        <GoogleBar />
        <RoboBar />
      </div>
      <TabStrip />
      <div className="flex min-h-0 grow">
        <div className={`min-w-0 grow overflow-hidden bg-[linear-gradient(to_bottom,#e2e2e2,#ffffff_80px)] px-2 pt-2 ${sans}`}>
          <SiteHeader />
          <UserLinks />
          <div className="mr-[14px] ml-3">
            <Breadcrumb />
            <PostForm />
            <hr className="mt-[25px] border-[#8c8c8c]" />
          </div>
        </div>
        <ScrollBar />
      </div>
      <StatusBar />
    </div>
  );
}

export default App;
